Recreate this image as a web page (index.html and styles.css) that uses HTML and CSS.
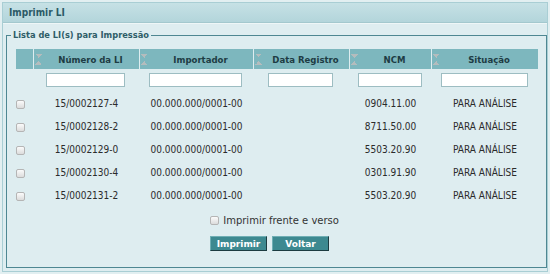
FILE: index.html
```html
<!DOCTYPE html>
<html lang="pt-BR">

<head>
  <meta charset="UTF-8" />
  <meta name="viewport" content="width=device-width, initial-scale=1.0" />
  <title>Imprimir LI</title>
  <link rel="stylesheet" href="styles.css">
</head>

<body>
  <div class="window">
    <div class="window-title">Imprimir LI</div>
    <div class="window-body">
      <fieldset class="print-list">
        <legend>Lista de LI(s) para Impressão</legend>
        <table class="grid">
          <colgroup>
            <col class="c-check">
            <col class="c-num">
            <col class="c-imp">
            <col class="c-data">
            <col class="c-ncm">
            <col class="c-sit">
          </colgroup>
          <thead>
            <tr class="grid-head">
              <th></th>
              <th><div class="th-in"><span class="sort"></span><span class="th-label">Número da LI</span></div></th>
              <th><div class="th-in"><span class="sort"></span><span class="th-label">Importador</span></div></th>
              <th><div class="th-in"><span class="sort"></span><span class="th-label">Data Registro</span></div></th>
              <th><div class="th-in"><span class="sort"></span><span class="th-label">NCM</span></div></th>
              <th><div class="th-in"><span class="sort"></span><span class="th-label">Situação</span></div></th>
            </tr>
            <tr class="grid-filter">
              <td></td>
              <td><input type="text" class="filter f-num"></td>
              <td><input type="text" class="filter f-imp"></td>
              <td><input type="text" class="filter f-data"></td>
              <td><input type="text" class="filter f-ncm"></td>
              <td><input type="text" class="filter f-sit"></td>
            </tr>
          </thead>
          <tbody>
            <tr>
              <td class="td-check"><input type="checkbox" class="chk"></td>
              <td>15/0002127-4</td>
              <td>00.000.000/0001-00</td>
              <td></td>
              <td>0904.11.00</td>
              <td>PARA ANÁLISE</td>
            </tr>
            <tr>
              <td class="td-check"><input type="checkbox" class="chk"></td>
              <td>15/0002128-2</td>
              <td>00.000.000/0001-00</td>
              <td></td>
              <td>8711.50.00</td>
              <td>PARA ANÁLISE</td>
            </tr>
            <tr>
              <td class="td-check"><input type="checkbox" class="chk"></td>
              <td>15/0002129-0</td>
              <td>00.000.000/0001-00</td>
              <td></td>
              <td>5503.20.90</td>
              <td>PARA ANÁLISE</td>
            </tr>
            <tr>
              <td class="td-check"><input type="checkbox" class="chk"></td>
              <td>15/0002130-4</td>
              <td>00.000.000/0001-00</td>
              <td></td>
              <td>0301.91.90</td>
              <td>PARA ANÁLISE</td>
            </tr>
            <tr>
              <td class="td-check"><input type="checkbox" class="chk"></td>
              <td>15/0002131-2</td>
              <td>00.000.000/0001-00</td>
              <td></td>
              <td>5503.20.90</td>
              <td>PARA ANÁLISE</td>
            </tr>
          </tbody>
        </table>

        <div class="options">
          <label class="opt"><input type="checkbox" class="chk"> Imprimir frente e verso</label>
        </div>
        <div class="actions">
          <button type="button" class="btn">Imprimir</button>
          <button type="button" class="btn">Voltar</button>
        </div>
      </fieldset>
    </div>
  </div>
</body>

</html>
```

FILE: styles.css
```css
body {
  margin: 0;
  background-color: #e2eff1;
  font-family: "DejaVu Sans", Verdana, sans-serif;
  font-size: 10px;
  color: #333;
}

.window {
  margin: 2px 2px 2px 2px;
  border: 1px solid #a9ced4;
  background-color: #deedf0;
}

.window-title {
  height: 19px;
  padding-left: 6px;
  line-height: 20px;
  font-size: 10px;
  font-weight: bold;
  font-stretch: condensed;
  color: #2b5a66;
  background: linear-gradient(#c6e1e5, #b3d5db);
  border-bottom: 1px solid #a3c8ce;
}

.window-body {
  border-top: 1px solid #eef6f7;
  padding: 5px 0 3px 3px;
}

.print-list {
  margin: 0;
  padding: 8px 0 16px 8px;
  border: 1px solid #4e8792;
}

.print-list legend {
  margin-left: -4px;
  padding: 0 2px;
  line-height: 12px;
  font-size: 9.2px;
  font-weight: bold;
  font-stretch: condensed;
  color: #2f5d68;
}

/* grade */
.grid {
  width: 524px;
  border-collapse: separate;
  border-spacing: 1px 0;
  table-layout: fixed;
  font-stretch: condensed;
}

.c-check { width: 17px; }
.c-num { width: 105px; }
.c-imp { width: 113px; }
.c-data { width: 95px; }
.c-ncm { width: 81px; }
.c-sit { width: 106px; }

.grid-head th {
  height: 20px;
  padding: 0;
  background-color: #7db7be;
  color: #1e3c44;
  font-size: 9.5px;
  font-weight: bold;
}

.th-in {
  display: flex;
  align-items: center;
  padding-left: 1px;
}

.th-label {
  flex: 1;
  text-align: center;
}

.sort {
  width: 7px;
  height: 11px;
  background:
    linear-gradient(to top right, transparent 50%, #b4bcbd 50%) no-repeat 0 0 / 4px 4px,
    linear-gradient(to top left, transparent 50%, #b4bcbd 50%) no-repeat 3px 0 / 4px 4px,
    linear-gradient(to bottom right, transparent 50%, #b4bcbd 50%) no-repeat 0 7px / 4px 4px,
    linear-gradient(to bottom left, transparent 50%, #b4bcbd 50%) no-repeat 3px 7px / 4px 4px;
}

.grid-filter td {
  height: 22px;
  padding: 0 2px 1px 0;
  text-align: center;
}

.filter {
  box-sizing: border-box;
  height: 14px;
  margin: 0;
  padding: 0 2px;
  border: 1px solid #9dbdc2;
  background-color: #fff;
  vertical-align: middle;
}

.f-num { width: 79px; }
.f-imp { width: 93px; }
.f-data { width: 65px; }
.f-ncm { width: 64px; }
.f-sit { width: 87px; }

.grid tbody td {
  height: 23px;
  padding: 0;
  text-align: center;
  font-size: 10px;
  color: #2b2b2b;
}

.grid tbody td.td-check {
  text-align: left;
}

.chk {
  appearance: none;
  width: 9px;
  height: 9px;
  margin: 0;
  border: 1px solid #b5b5b5;
  border-radius: 2px;
  background: linear-gradient(#fbfbfb, #dcdcdc);
  vertical-align: middle;
}

.options {
  margin-top: 7px;
  padding-right: 12px;
  text-align: center;
  line-height: 14px;
}

.opt {
  color: #333;
}

.opt .chk {
  position: relative;
  top: -1px;
  margin-right: 1px;
}

.actions {
  margin-top: 8px;
  display: flex;
  justify-content: center;
  gap: 5px;
  padding-right: 22px;
}

.btn {
  width: 57px;
  height: 15px;
  padding: 0;
  border: 1px solid;
  border-color: #6faeb4 #1c3b40 #1c3b40 #6faeb4;
  background-color: #3d8990;
  color: #fff;
  font-family: "DejaVu Sans", Verdana, sans-serif;
  font-size: 9px;
  font-weight: bold;
}
```
